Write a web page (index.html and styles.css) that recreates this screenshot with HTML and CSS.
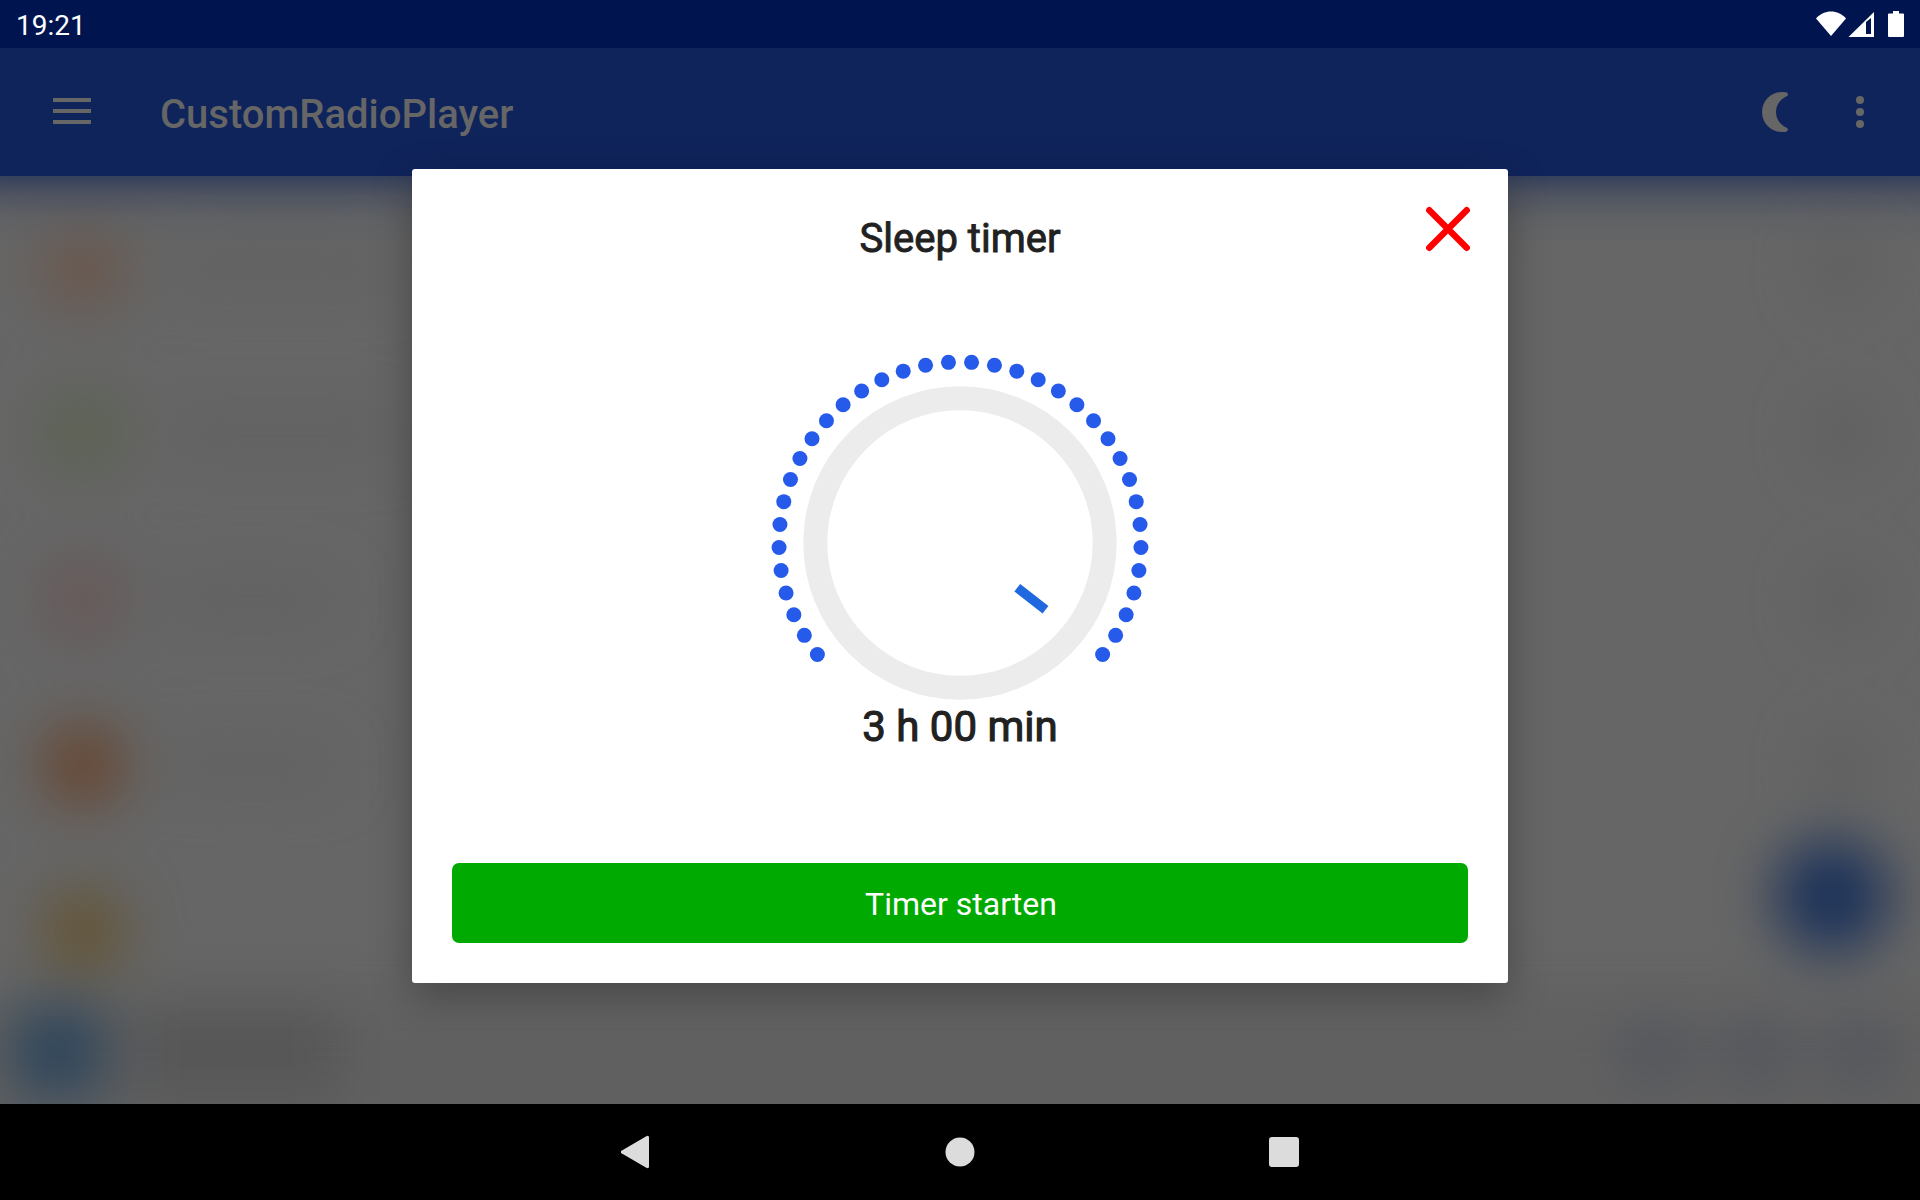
FILE: index.html
```html
<!DOCTYPE html>
<html lang="de">
<head>
    <meta charset="UTF-8">
    <meta name="viewport" content="width=device-width, initial-scale=1.0">
    <title>CustomRadioPlayer</title>
    <link rel="stylesheet" href="styles.css">
</head>
<body>
    <div class="status-bar">
        <span class="clock">19:21</span>
        <svg class="status-icons" width="90" height="28" viewBox="0 0 90 28">
            <path d="M2 8.5C10 -0.8 24 -0.8 32 8.5L17 26Z"/>
            <path fill-rule="evenodd" d="M34.5 27L60 2V27ZM52 12V24H57V8Z"/>
            <path d="M79 1h6v2.500h4a1 1 0 0 1 1 1V26a1 1 0 0 1-1 1H75a1 1 0 0 1-1-1V4.500a1 1 0 0 1 1-1h4Z"/>
        </svg>
    </div>

    <header class="app-bar">
        <svg class="menu-icon" width="38" height="26" viewBox="0 0 38 26">
            <path d="M0 0h38v4H0ZM0 11h38v4H0ZM0 22h38v4H0Z"/>
        </svg>
        <h1>CustomRadioPlayer</h1>
        <svg class="moon-icon" width="26" height="40" viewBox="0 0 26 40">
            <path d="M20 0C22 0 23.700 0.200 24.700 0.600C26.300 1.300 26.300 3.500 24.700 4.200C18.500 7 14 12.700 14 20C14 27.300 18.500 33 24.700 35.800C26.300 36.500 26.300 38.700 24.700 39.400C23.700 39.800 22 40 20 40A20 20 0 0 1 20 0Z"/>
        </svg>
        <svg class="more-icon" width="8" height="32" viewBox="0 0 8 32">
            <circle cx="4" cy="4" r="4"/>
            <circle cx="4" cy="16" r="4"/>
            <circle cx="4" cy="28" r="4"/>
        </svg>
    </header>

    <main class="content">
        <div class="blurred">
            <div class="station"><i class="logo orange"></i><i class="name wide"></i><i class="action"></i></div>
            <div class="station"><i class="logo green"></i><i class="name wide"></i><i class="action"></i></div>
            <div class="station"><i class="logo red"></i><i class="name"></i><i class="action"></i></div>
            <div class="station"><i class="logo brown"></i><i class="name"></i><i class="action"></i></div>
            <div class="station"><i class="logo yellow"></i></div>
            <div class="player">
                <i class="cover"></i>
                <i class="track"></i>
                <i class="control"></i>
                <i class="control"></i>
                <i class="control"></i>
            </div>
            <div class="fab"></div>
        </div>
    </main>

    <nav class="nav-bar">
        <svg width="30" height="34" viewBox="0 0 30 34">
            <path d="M25.300 1.200Q28 0 28 2.500V31.500Q28 34 25.300 32.800L0.500 18.300Q-1 17 0.500 15.700Z"/>
        </svg>
        <svg width="30" height="30" viewBox="0 0 30 30">
            <circle cx="15" cy="15" r="14.500"/>
        </svg>
        <svg width="30" height="30" viewBox="0 0 30 30">
            <rect width="30" height="30" rx="3"/>
        </svg>
    </nav>

    <!-- Sleep timer -->
    <div class="dialog">
        <svg class="close" width="46" height="46" viewBox="0 0 46 46">
            <path d="M4.300 4.300L41.700 41.700M41.700 4.300L4.300 41.700"/>
        </svg>
        <h2>Sleep timer</h2>
        <svg class="dial" id="dial" width="400" height="400" viewBox="-200 -200 400 400">
            <circle class="ring" r="144.700"/>
            <path class="pointer" d="M57.300 44.700L85.500 66.700"/>
        </svg>
        <p class="duration">3 h 00 min</p>
        <button class="start">Timer starten</button>
    </div>

    <script>
        const dial = document.getElementById('dial');
        const dots = 36;
        const startAngle = 52;
        const step = (360 - 2 * startAngle) / (dots - 1);

        // angles run clockwise from the bottom of the dial
        for (let i = 0; i < dots; i++) {
            const angle = (startAngle + i * step) * Math.PI / 180;
            const dot = document.createElementNS('http://www.w3.org/2000/svg', 'circle');
            dot.setAttribute('class', 'dot');
            dot.setAttribute('cx', -181 * Math.sin(angle));
            dot.setAttribute('cy', 181 * Math.cos(angle));
            dot.setAttribute('r', 7.5);
            dial.appendChild(dot);
        }
    </script>
</body>
</html>
```
FILE: styles.css
```css
* {
    box-sizing: border-box;
}

body {
    display: flex;
    flex-direction: column;
    position: relative;
    width: 1920px;
    height: 1200px;
    margin: 0;
    overflow: hidden;
    font-family: Roboto, sans-serif;
    background: #666;
}

svg {
    display: block;
}

h1, h2, p {
    margin: 0;
}

.status-bar {
    display: flex;
    justify-content: space-between;
    height: 48px;
    padding: 0 16px 0 16px;
    background: #001550;
    color: #fff;
}

.clock {
    font-size: 28px;
    line-height: 52px;
}

.status-icons {
    margin-top: 10px;
    fill: #fff;
}

.app-bar {
    display: flex;
    align-items: center;
    height: 128px;
    padding: 0 56px 0 53px;
    background: #10245c;
    color: #666;
    fill: #666;
}

.app-bar h1 {
    margin-left: 69px;
    padding-top: 6px;
    font-size: 40px;
    font-weight: 500;
    line-height: 48px;
}

.menu-icon {
    margin-top: -2px;
}

.moon-icon {
    margin-left: auto;
}

.more-icon {
    margin-left: 68px;
}

.content {
    position: relative;
    height: 928px;
    overflow: hidden;
    background: #666;
}

/* app bar colour running into the blurred list */
.content::before {
    content: "";
    position: absolute;
    z-index: 1;
    top: 0;
    left: 0;
    width: 100%;
    height: 90px;
    background: linear-gradient(rgba(32, 48, 86, 0.7), rgba(56, 66, 92, 0.48) 20px, rgba(80, 86, 98, 0.28) 42px, rgba(95, 97, 100, 0.07) 68px, rgba(102, 102, 102, 0));
}

.blurred {
    display: flex;
    flex-direction: column;
    height: 928px;
    padding-top: 8px;
    filter: blur(28px);
}

.station {
    display: flex;
    align-items: center;
    flex: 0 0 166px;
    padding: 0 48px 0 41px;
}

.logo {
    width: 84px;
    height: 84px;
    border-radius: 50%;
}

.orange {
    background: #6a564b;
}

.green {
    background: #5c6252;
}

.red {
    background: #675858;
}

.brown {
    background: #674631;
}

.yellow {
    background: #645434;
}

.name {
    width: 160px;
    height: 34px;
    margin-left: 46px;
    background: #616161;
}

.name.wide {
    width: 220px;
}

.action {
    width: 60px;
    height: 60px;
    margin-left: auto;
    border-radius: 50%;
    background: #5f5f5f;
}

.player {
    display: flex;
    align-items: center;
    flex: 0 0 220px;
    margin: -20px -80px 0;
    padding: 0 110px 104px 93px;
    background: #606060;
}

.cover {
    width: 90px;
    height: 90px;
    border-radius: 12px;
    background: #2e455b;
}

.track {
    width: 200px;
    height: 90px;
    margin: 0 auto 0 34px;
    background: #565656;
}

.control {
    width: 62px;
    height: 62px;
    margin-left: 40px;
    border-radius: 50%;
    background: #50535d;
}

.fab {
    position: absolute;
    top: 663px;
    left: 1775px;
    width: 114px;
    height: 114px;
    border-radius: 50%;
    background: #1c3259;
}

.nav-bar {
    display: flex;
    align-items: center;
    justify-content: center;
    gap: 294px;
    height: 96px;
    background: #000;
    fill: #dcdcdc;
}

.dialog {
    display: flex;
    flex-direction: column;
    align-items: center;
    position: absolute;
    z-index: 2;
    top: 169px;
    left: 412px;
    width: 1096px;
    height: 814px;
    padding: 47px 40px 40px;
    border-radius: 3px;
    background: #fff;
    color: #212121;
    box-shadow: 0 12px 40px rgba(0, 0, 0, 0.3);
}

.close {
    position: absolute;
    top: 37px;
    right: 37px;
    stroke: #f00;
    stroke-width: 6.5;
    stroke-linecap: round;
}

.dialog h2 {
    font-size: 40px;
    font-weight: 400;
    line-height: 46px;
    -webkit-text-stroke: 0.9px #212121;
}

.dial {
    margin-top: 81px;
}

.ring {
    fill: none;
    stroke: #ececec;
    stroke-width: 24;
}

.pointer {
    stroke: #2068e0;
    stroke-width: 9.5;
}

.dot {
    fill: #255aea;
}

.duration {
    margin-top: -41px;
    font-size: 42px;
    font-weight: 400;
    line-height: 50px;
    -webkit-text-stroke: 1.1px #212121;
}

.start {
    width: 100%;
    height: 80px;
    margin-top: auto;
    padding: 2px 0 0 2px;
    border: none;
    border-radius: 7px;
    background: #00aa00;
    color: #fff;
    font-family: Roboto, sans-serif;
    font-size: 32px;
}
```
